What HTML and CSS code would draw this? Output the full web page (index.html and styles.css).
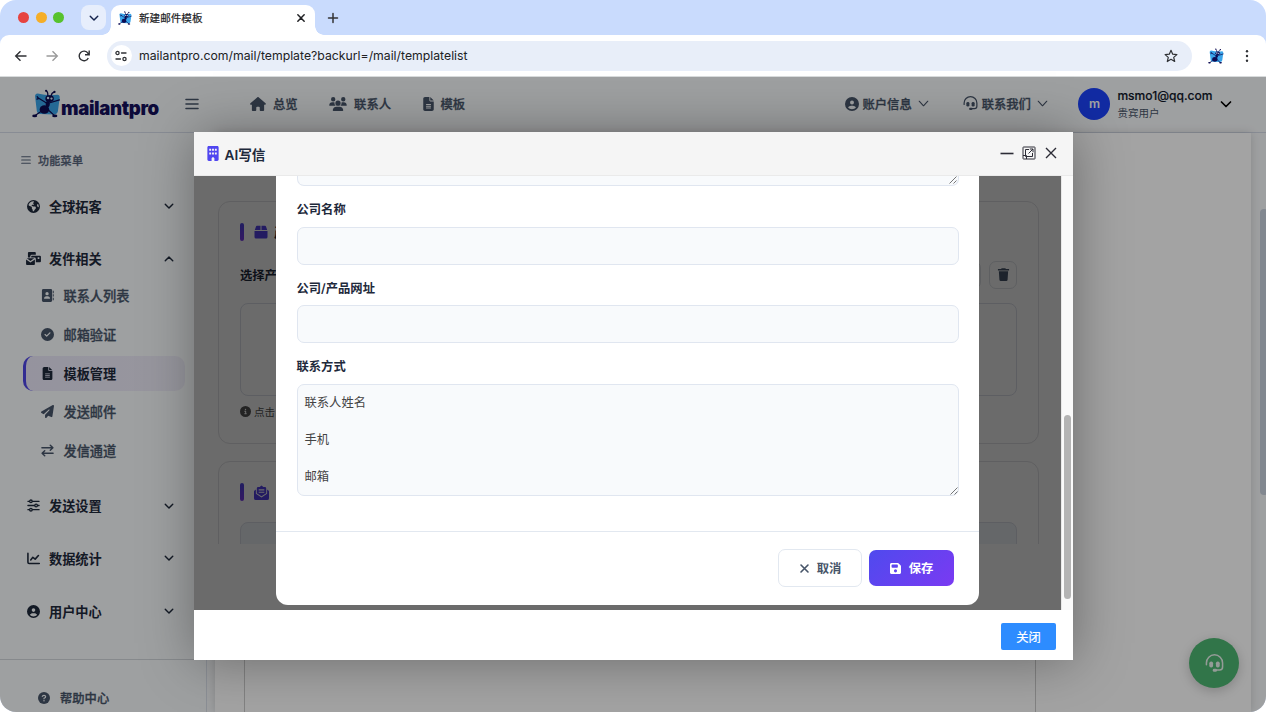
FILE: index.html
```html
<!DOCTYPE html>
<html lang="zh-CN">
<head>
  <meta charset="UTF-8">
  <meta name="viewport" content="width=device-width, initial-scale=1.0">
  <title>新建邮件模板</title>
  <link rel="stylesheet" href="styles.css">
</head>
<body>
  <!-- Icon sprite -->
  <svg class="sprite" xmlns="http://www.w3.org/2000/svg">
    <symbol id="i-ant" viewBox="0 0 28 28">
      <path fill="#3aa5ea" d="M3 7.500Q2.600 4.500 5.500 4.300Q15 6.800 24.500 5.600Q27.200 5.800 26.700 9L25 21.500Q24.500 24.600 21 24.500L8 24.200Q5 24 4.600 21z"/>
      <g fill="#0d0b52">
        <ellipse cx="12" cy="19.800" rx="4.600" ry="4.100"/>
        <ellipse cx="15.200" cy="14.600" rx="2" ry="3"/>
        <ellipse cx="17" cy="9.300" rx="4.100" ry="3.200"/>
        <ellipse cx="2.600" cy="26" rx="2.400" ry="1.300"/>
        <ellipse cx="22" cy="26" rx="2.500" ry="1.300"/>
        <circle cx="13.600" cy="1.800" r="1.100"/>
        <circle cx="21.700" cy="2.800" r="1.100"/>
      </g>
      <g fill="none" stroke="#0d0b52" stroke-width="1.200" stroke-linecap="round">
        <path d="M15.300 6.500Q15.500 3 14 2M18.500 6.500Q19 3.500 21.500 3M14 13.500L6.500 9M16.500 13.500L26.500 10.500M9 21.500L3 25.500M15.500 20L21.500 25.500M6.500 9L4.800 9.800M6.500 9L5 7.500"/>
      </g>
      <g fill="#d7e8f8"><circle cx="15.500" cy="8.800" r="1.200"/><circle cx="18.800" cy="9.200" r="1.100"/></g>
    </symbol>
    <symbol id="i-down" viewBox="0 0 12 12"><path d="M1.500 4L6 8.500L10.500 4" fill="none" stroke="currentColor" stroke-width="1.700" stroke-linecap="round" stroke-linejoin="round"/></symbol>
    <symbol id="i-up" viewBox="0 0 12 12"><path d="M1.500 8L6 3.500L10.500 8" fill="none" stroke="currentColor" stroke-width="1.700" stroke-linecap="round" stroke-linejoin="round"/></symbol>
    <symbol id="i-thin" viewBox="0 0 12 12"><path d="M1.300 3.500L6 8.500L10.700 3.500" fill="none" stroke="currentColor" stroke-width="1.200" stroke-linecap="round" stroke-linejoin="round"/></symbol>
    <symbol id="i-bars" viewBox="0 0 14 14"><path d="M1 2.500H13M1 7H13M1 11.500H13" stroke="currentColor" stroke-width="1.600" stroke-linecap="round"/></symbol>
    <symbol id="i-close" viewBox="0 0 12 12"><path d="M2.200 2.200L9.800 9.800M9.800 2.200L2.200 9.800" stroke="currentColor" stroke-width="1.800" stroke-linecap="round"/></symbol>
    <symbol id="i-house" viewBox="0 0 576 512"><path d="M575.8 255.5c0 18-15 32.1-32 32.1h-32l.7 160.2c0 2.700-.2 5.400-.5 8.100V472c0 22.100-17.900 40-40 40H392c-22.100 0-40-17.900-40-40V384c0-17.700-14.300-32-32-32H256c-17.700 0-32 14.300-32 32v88c0 22.100-17.900 40-40 40H104c-22.100 0-40-17.900-40-40V287.600H32c-18 0-32-14-32-32.100c0-9 3-17 10-24L266.400 8c7-7 15-8 22-8s15 2 21 7L564.800 231.500c8 7 12 15 11 24z"/></symbol>
    <symbol id="i-users" viewBox="0 0 640 512"><path d="M144 0a80 80 0 1 1 0 160a80 80 0 1 1 0-160zM512 0a80 80 0 1 1 0 160a80 80 0 1 1 0-160zM0 298.700C0 239.800 47.800 192 106.700 192h42.700c15.900 0 31 3.500 44.600 9.700c-1.300 7.200-1.900 14.700-1.900 22.300c0 38.200 16.800 72.500 43.300 96H21.300C9.600 320 0 310.400 0 298.700zM405.300 320c26.600-23.500 43.300-57.800 43.300-96c0-7.600-.7-15-1.900-22.300c13.600-6.300 28.700-9.700 44.600-9.700h42.700C592.200 192 640 239.800 640 298.700c0 11.800-9.600 21.300-21.300 21.300zM224 224a96 96 0 1 1 192 0a96 96 0 1 1-192 0zM128 485.300C128 411.700 187.700 352 261.300 352h117.400C452.300 352 512 411.700 512 485.300c0 14.700-11.900 26.700-26.700 26.700H154.700c-14.700 0-26.700-11.900-26.700-26.700z"/></symbol>
    <symbol id="i-file" viewBox="0 0 384 512"><path d="M64 0C28.700 0 0 28.700 0 64V448c0 35.300 28.700 64 64 64H320c35.300 0 64-28.700 64-64V160H256c-17.700 0-32-14.300-32-32V0H64zM256 0V128H384L256 0zM112 256H272c8.800 0 16 7.200 16 16s-7.200 16-16 16H112c-8.800 0-16-7.200-16-16s7.200-16 16-16zm0 64H272c8.800 0 16 7.200 16 16s-7.200 16-16 16H112c-8.800 0-16-7.200-16-16s7.200-16 16-16zm0 64H272c8.800 0 16 7.200 16 16s-7.200 16-16 16H112c-8.800 0-16-7.200-16-16s7.200-16 16-16z"/></symbol>
    <symbol id="i-user" viewBox="0 0 512 512"><path d="M399 384.200C376.900 345.800 335.400 320 288 320H224c-47.400 0-88.900 25.800-111 64.200c35.200 39.200 86.200 63.800 143 63.800s107.800-24.700 143-63.800zM0 256a256 256 0 1 1 512 0A256 256 0 1 1 0 256zm256 16a72 72 0 1 0 0-144 72 72 0 1 0 0 144z"/></symbol>
    <symbol id="i-headset" viewBox="0 0 16 16"><path d="M1.200 9V7.500a6.800 6.800 0 0 1 13.600 0V11a2.500 2.500 0 0 1-2.500 2.500H9.500" fill="none" stroke="currentColor" stroke-width="1.300" stroke-linecap="round"/><rect x="3.600" y="6.300" width="3.200" height="5" rx="1.500"/><rect x="9.200" y="6.300" width="3.200" height="5" rx="1.500"/><rect x="6.500" y="12.500" width="3.600" height="2.500" rx="1.200"/></symbol>
    <symbol id="i-globe" viewBox="0 0 512 512"><path d="M57.700 193l9.400 16.400c8.300 14.500 21.900 25.200 38 29.800L163 255.700c17.200 4.900 29 20.600 29 38.500v39.900c0 11 6.200 21 16 25.900s16 14.900 16 25.900v39c0 15.600 14.900 26.900 29.900 22.600c16.100-4.600 28.600-17.500 32.700-33.800l2.800-11.200c4.200-16.900 15.200-31.400 30.300-40l8.100-4.600c15-8.500 24.200-24.500 24.200-41.700v-8.300c0-12.700-5.100-24.900-14.100-33.900l-3.900-3.900c-9-9-21.200-14.100-33.900-14.100H257c-11.100 0-22.100-2.900-31.800-8.400l-34.500-19.700c-4.300-2.500-7.600-6.500-9.200-11.200c-3.200-9.600 1.100-20 10.200-24.500l5.900-3c6.600-3.300 14.300-3.900 21.300-1.500l23.200 7.700c8.200 2.700 17.200-.4 21.900-7.500c4.700-7 4.200-16.300-1.200-22.800l-13.600-16.300c-10-12-9.900-29.500 .3-41.300l15.700-18.300c8.800-10.300 10.200-25 3.500-36.700l-2.400-4.200c-3.500-.2-6.900-.3-10.400-.3C163.100 48 84.400 108.900 57.700 193zM464 256c0-36.800-9.600-71.400-26.400-101.500L412 164.800c-15.700 6.300-23.800 23.800-18.500 39.800l16.900 50.700c3.500 10.400 12 18.300 22.600 20.900l29.100 7.300c1.200-9 1.800-18.200 1.800-27.500zM0 256a256 256 0 1 1 512 0A256 256 0 1 1 0 256z"/></symbol>
    <symbol id="i-mails" viewBox="0 0 16 14"><path fill-rule="evenodd" d="M3 0h6.500a1 1 0 0 1 1 1v2H6.200a1.700 1.700 0 0 0-1.700 1.700V6H2V1a1 1 0 0 1 1-1zM6.500 4h8.400A1.100 1.100 0 0 1 16 5.100v4.800a1.100 1.100 0 0 1-1.100 1.100H10.500V7.500A1.500 1.500 0 0 0 9 6H5.500V5a1 1 0 0 1 1-1zM12.500 5.700v1.800h1.800V5.700zM0 8l4.700 3.200L9.500 8v5a1 1 0 0 1-1 1H1a1 1 0 0 1-1-1zM.8 6.800h8L4.700 9.700z"/></symbol>
    <symbol id="i-book" viewBox="0 0 14 14"><path fill-rule="evenodd" d="M2.500 0h8A1.500 1.500 0 0 1 12 1.500v11a1.500 1.500 0 0 1-1.500 1.500h-8A1.500 1.500 0 0 1 1 12.500v-11A1.500 1.500 0 0 1 2.500 0zM6.500 3.200a1.800 1.800 0 1 0 0 3.600a1.800 1.800 0 1 0 0-3.600zM3.300 10.500h6.400a2.600 2.600 0 0 0-2.600-2.700H5.900a2.600 2.600 0 0 0-2.600 2.700z"/><path d="M12.700 2h1v2.500h-1zM12.700 5.700h1v2.500h-1zM12.700 9.500h1V12h-1z"/></symbol>
    <symbol id="i-check" viewBox="0 0 512 512"><path d="M256 512A256 256 0 1 0 256 0a256 256 0 1 0 0 512zM369 209L241 337c-9.400 9.400-24.600 9.400-33.900 0l-64-64c-9.400-9.400-9.400-24.600 0-33.900s24.600-9.400 33.900 0l47 47L335 175c9.400-9.400 24.600-9.400 33.900 0s9.400 24.600 0 33.900z"/></symbol>
    <symbol id="i-plane" viewBox="0 0 512 512"><path d="M498.100 5.600c10.100 7 15.400 19.100 13.500 31.200l-64 416c-1.500 9.700-7.400 18.200-16 23s-18.900 5.400-28 1.600L284 427.700l-68.500 74.100c-8.900 9.700-22.900 12.900-35.200 8.100S160 493.200 160 480V396.400c0-4 1.500-7.800 4.200-10.700L331.800 202.800c5.800-6.300 5.600-16-.4-22s-15.700-6.400-22-.7L106 360.800 17.700 316.600C7.100 311.300 .3 300.700 0 288.900s5.900-22.800 16.100-28.700l448-256c10.700-6.100 23.900-5.500 34 1.400z"/></symbol>
    <symbol id="i-swap" viewBox="0 0 14 14"><path d="M1 4H12.500M10 1.300L12.800 4L10 6.700M13 10H1.500M4 7.300L1.200 10L4 12.700" fill="none" stroke="currentColor" stroke-width="1.600" stroke-linecap="round" stroke-linejoin="round"/></symbol>
    <symbol id="i-sliders" viewBox="0 0 14 14"><g fill="none" stroke="currentColor" stroke-width="1.400" stroke-linecap="round"><path d="M1 2.500H2.500M6 2.500H13M1 7H8M11.500 7H13M1 11.500H2.500M6 11.500H13"/><circle cx="4.200" cy="2.500" r="1.400"/><circle cx="9.800" cy="7" r="1.400"/><circle cx="4.200" cy="11.500" r="1.400"/></g></symbol>
    <symbol id="i-chart" viewBox="0 0 14 14"><path d="M1 1.500V11a1.300 1.300 0 0 0 1.300 1.300H13.200M4 8.500L6.300 5.700L8.800 7.700L12.300 3.800" fill="none" stroke="currentColor" stroke-width="1.700" stroke-linecap="round" stroke-linejoin="round"/></symbol>
    <symbol id="i-help" viewBox="0 0 14 14"><circle cx="7" cy="7" r="7"/><path d="M5 5.300Q5.200 3.900 7 3.900T9 5.500Q9 6.500 7 7.300V8" fill="none" stroke="#f8fafc" stroke-width="1.300" stroke-linecap="round"/><circle cx="7" cy="10.200" r=".85" fill="#f8fafc"/></symbol>
    <symbol id="i-building" viewBox="0 0 384 512"><path fill-rule="evenodd" d="M48 0C21.500 0 0 21.500 0 48V464c0 26.500 21.500 48 48 48h96V432c0-26.500 21.500-48 48-48s48 21.500 48 48v80h96c26.500 0 48-21.500 48-48V48c0-26.500-21.500-48-48-48zM64 96h64v64H64zM160 96h64v64h-64zM256 96h64v64h-64zM64 224h64v64H64zM160 224h64v64h-64zM256 224h64v64h-64z"/></symbol>
    <symbol id="i-box" viewBox="0 0 14 14"><path d="M3 .8h3.500V5H.8L2 1.500A1 1 0 0 1 3 .8zM7.500.8H11a1 1 0 0 1 1 .7L13.200 5H7.500zM.5 6h13v6a1.500 1.500 0 0 1-1.500 1.500H2A1.500 1.500 0 0 1 .5 12z"/></symbol>
    <symbol id="i-letter" viewBox="0 0 16 16"><path fill-rule="evenodd" d="M3 3.500A1.500 1.500 0 0 1 4.500 2H6l2-1.600L10 2h1.500A1.500 1.500 0 0 1 13 3.500v5.200L8 12L3 8.700zM5 4.600v1.200h6V4.600zM5 7.100v1.200h6V7.100zM2 4.700v4.600l6 4l6-4V4.700l1.400 1.200a1.500 1.500 0 0 1 .6 1.100v7a2 2 0 0 1-2 2H2a2 2 0 0 1-2-2V7a1.500 1.500 0 0 1 .6-1.100z"/></symbol>
    <symbol id="i-trash" viewBox="0 0 12 14"><path d="M4 .3h4l.6.9H12v1.500H0V1.200h3.400zM1 3.500h10l-.6 9.200a1.400 1.400 0 0 1-1.400 1.300H3a1.400 1.400 0 0 1-1.400-1.300z"/></symbol>
    <symbol id="i-info" viewBox="0 0 512 512"><path d="M256 512A256 256 0 1 0 256 0a256 256 0 1 0 0 512zM216 336h24V272H216c-13.300 0-24-10.700-24-24s10.700-24 24-24h48c13.300 0 24 10.700 24 24v88h8c13.300 0 24 10.700 24 24s-10.700 24-24 24H216c-13.300 0-24-10.700-24-24s10.700-24 24-24zm40-208a32 32 0 1 1 0 64 32 32 0 1 1 0-64z"/></symbol>
    <symbol id="i-save" viewBox="0 32 448 448"><path d="M64 32C28.700 32 0 60.700 0 96V416c0 35.300 28.700 64 64 64H384c35.300 0 64-28.700 64-64V173.300c0-17-6.700-33.300-18.700-45.300L352 50.700C340 38.700 323.700 32 306.700 32H64zm0 96c0-17.700 14.300-32 32-32H288c17.700 0 32 14.300 32 32v64c0 17.700-14.300 32-32 32H96c-17.700 0-32-14.300-32-32V128zM224 288a64 64 0 1 1 0 128 64 64 0 1 1 0-128z"/></symbol>
    <symbol id="i-grip" viewBox="0 0 8 8"><path d="M.5 7.500L7.500 .5M4.500 7.500L7.500 4.500" stroke="#555" stroke-width=".8"/></symbol>
  </svg>

  <div class="window">
    <div class="tabbar">
      <div class="lights"><i class="red"></i><i class="yellow"></i><i class="green"></i></div>
      <div class="tab-search"><svg class="icon s10"><use href="#i-down"/></svg></div>
      <div class="tab">
        <svg class="icon s14"><use href="#i-ant"/></svg>
        <span class="tab-title">新建邮件模板</span>
        <svg class="icon s10"><use href="#i-close"/></svg>
      </div>
      <svg class="icon new-tab" viewBox="0 0 12 12"><path d="M6 1.500V10.500M1.500 6H10.500" stroke="currentColor" stroke-width="1.500" stroke-linecap="round"/></svg>
    </div>

    <div class="toolbar">
      <svg class="icon nav-btn" viewBox="0 0 14 14"><path d="M12.500 7H2M6.500 2.200L1.700 7L6.500 11.800" fill="none" stroke="currentColor" stroke-width="1.400"/></svg>
      <svg class="icon nav-btn off" viewBox="0 0 14 14"><path d="M1.500 7H12M7.500 2.200L12.300 7L7.500 11.800" fill="none" stroke="currentColor" stroke-width="1.400"/></svg>
      <svg class="icon nav-btn" viewBox="0 0 14 14"><path d="M11.300 9A4.800 4.800 0 1 1 11 4.300L12 5.600M12.200 1.500V5.700H8" fill="none" stroke="currentColor" stroke-width="1.400"/></svg>
      <div class="url-bar">
        <span class="site-info"><svg class="icon s12" viewBox="0 0 12 12"><g fill="none" stroke="currentColor" stroke-width="1.300" stroke-linecap="round"><circle cx="2.500" cy="3" r="1.600"/><path d="M6.500 3H11M1 9H5.500"/><circle cx="9.500" cy="9" r="1.600"/></g></svg></span>
        <span class="url">mailantpro.com/mail/template?backurl=/mail/templatelist</span>
        <svg class="icon s14" viewBox="0 0 14 14"><path d="M7 1.300L8.700 5.200L12.900 5.600L9.700 8.400L10.700 12.500L7 10.300L3.300 12.500L4.300 8.400L1.100 5.600L5.300 5.200z" fill="none" stroke="currentColor" stroke-width="1.200" stroke-linejoin="round"/></svg>
      </div>
      <svg class="icon ext"><use href="#i-ant"/></svg>
      <svg class="icon dots" viewBox="0 0 4 14"><circle cx="2" cy="2.200" r="1.200"/><circle cx="2" cy="7" r="1.200"/><circle cx="2" cy="11.800" r="1.200"/></svg>
    </div>

    <div class="page">
      <header class="topbar">
        <div class="logo"><svg class="icon logo-ant"><use href="#i-ant"/></svg><span>mailantpro</span></div>
        <svg class="icon toggle"><use href="#i-bars"/></svg>
        <nav class="topnav">
          <a><svg class="icon w16"><use href="#i-house"/></svg>总览</a>
          <a><svg class="icon w18"><use href="#i-users"/></svg>联系人</a>
          <a><svg class="icon w11"><use href="#i-file"/></svg>模板</a>
        </nav>
        <div class="topright">
          <a class="drop"><svg class="icon s14"><use href="#i-user"/></svg>账户信息<svg class="icon arrow"><use href="#i-thin"/></svg></a>
          <a class="drop"><svg class="icon s15"><use href="#i-headset"/></svg>联系我们<svg class="icon arrow"><use href="#i-thin"/></svg></a>
          <div class="account">
            <span class="avatar">m</span>
            <div class="who"><b>msmo1@qq.com</b><small>贵宾用户</small></div>
            <svg class="icon s12"><use href="#i-down"/></svg>
          </div>
        </div>
      </header>

      <div class="layout">
        <aside class="sidebar">
          <div class="side-title"><svg class="icon s10"><use href="#i-bars"/></svg>功能菜单</div>
          <div class="group"><svg class="icon"><use href="#i-globe"/></svg><span>全球拓客</span><svg class="icon s10"><use href="#i-down"/></svg></div>
          <div class="group"><svg class="icon mails"><use href="#i-mails"/></svg><span>发件相关</span><svg class="icon s10"><use href="#i-up"/></svg></div>
          <div class="subs">
            <a><svg class="icon"><use href="#i-book"/></svg>联系人列表</a>
            <a><svg class="icon"><use href="#i-check"/></svg>邮箱验证</a>
            <a class="active"><svg class="icon"><use href="#i-file"/></svg>模板管理</a>
            <a><svg class="icon"><use href="#i-plane"/></svg>发送邮件</a>
            <a><svg class="icon"><use href="#i-swap"/></svg>发信通道</a>
          </div>
          <div class="group"><svg class="icon"><use href="#i-sliders"/></svg><span>发送设置</span><svg class="icon s10"><use href="#i-down"/></svg></div>
          <div class="group"><svg class="icon"><use href="#i-chart"/></svg><span>数据统计</span><svg class="icon s10"><use href="#i-down"/></svg></div>
          <div class="group"><svg class="icon"><use href="#i-user"/></svg><span>用户中心</span><svg class="icon s10"><use href="#i-down"/></svg></div>
          <div class="side-foot"><svg class="icon s12"><use href="#i-help"/></svg>帮助中心</div>
        </aside>
        <main class="content"><div class="sheet"></div></main>
        <div class="page-scroll"><div class="page-thumb"></div></div>
      </div>

      <div class="chat"><svg class="icon"><use href="#i-headset"/></svg></div>
      <div class="shade"></div>

      <div class="layer">
        <div class="layer-head">
          <svg class="icon building"><use href="#i-building"/></svg>
          <h2>AI写信</h2>
          <div class="layer-tools">
            <svg class="icon s14" viewBox="0 0 14 14"><path d="M.5 7.500H13.500" stroke="currentColor" stroke-width="1.600"/></svg>
            <svg class="icon s14" viewBox="0 0 14 14"><g fill="none" stroke="currentColor" stroke-width="1"><rect x="1" y="1" width="12" height="12" rx=".5"/><path d="M7 3.500H3.500V10.500H10.500V7M7.800 3H11V6.200M11 3L6.500 7.500M1 9.500H4.500V13"/></g></svg>
            <svg class="icon s14" viewBox="0 0 14 14"><path d="M2 2L12 12M12 2L2 12" stroke="currentColor" stroke-width="1.400"/></svg>
          </div>
        </div>

        <div class="layer-body">
          <div class="frame">
            <div class="frame-page">
              <section class="card">
                <h3><svg class="icon s14"><use href="#i-box"/></svg>产</h3>
                <div class="pick">
                  <span>选择产品</span>
                  <button class="square"></button>
                  <button class="square"><svg class="icon"><use href="#i-trash"/></svg></button>
                </div>
                <div class="area"></div>
                <p class="tip"><svg class="icon s11"><use href="#i-info"/></svg>点击</p>
              </section>
              <section class="card">
                <h3><svg class="icon s15"><use href="#i-letter"/></svg></h3>
                <div class="area tinted"></div>
              </section>
            </div>
            <div class="frame-shade"></div>

            <div class="dialog">
              <form class="fields">
                <div class="prev-area"><svg class="grip"><use href="#i-grip"/></svg></div>
                <label for="company">公司名称</label>
                <input type="text" id="company">
                <label for="site">公司/产品网址</label>
                <input type="text" id="site">
                <label for="contact">联系方式</label>
                <div class="area-wrap">
                  <textarea id="contact">联系人姓名

手机

邮箱</textarea>
                  <svg class="grip"><use href="#i-grip"/></svg>
                </div>
              </form>
              <div class="actions">
                <button class="cancel"><svg class="icon s11"><use href="#i-close"/></svg>取消</button>
                <button class="save"><svg class="icon s11"><use href="#i-save"/></svg>保存</button>
              </div>
            </div>
          </div>
          <div class="frame-scroll"><div class="frame-thumb"></div></div>
        </div>

        <div class="layer-foot"><button class="close-btn">关闭</button></div>
      </div>
    </div>
  </div>
</body>
</html>
```

FILE: styles.css
```css
* {
  margin: 0;
  padding: 0;
  box-sizing: border-box;
}

body {
  font-family: Inter, "Noto Sans CJK SC", sans-serif;
  font-size: 12.3px;
  background: #fff;
  overflow: hidden;
}

button, input, textarea {
  font-family: inherit;
}

.sprite {
  display: none;
}

.icon {
  flex: none;
  display: block;
  width: 13px;
  height: 13px;
  fill: currentColor;
}

.s10 { width: 10px; height: 10px; }
.s11 { width: 11px; height: 11px; }
.s12 { width: 12px; height: 12px; }
.s14 { width: 14px; height: 14px; }
.s15 { width: 15px; height: 15px; }
.w11 { width: 11px; height: 14px; }
.w16 { width: 16px; height: 14px; }
.w18 { width: 18px; height: 14px; }

/* Browser window */
.window {
  display: flex;
  flex-direction: column;
  width: 1266px;
  height: 712px;
  border-radius: 16px;
  overflow: hidden;
  background: #c9dbfd;
}

.tabbar {
  display: flex;
  align-items: center;
  height: 35px;
  padding-left: 18px;
}

.lights {
  display: flex;
  gap: 6.5px;
  width: 63px;
}

.lights i {
  width: 11px;
  height: 11px;
  border-radius: 50%;
}

.red { background: #e64340; }
.yellow { background: #f5ae28; }
.green { background: #57c22d; }

.tab-search {
  display: flex;
  align-items: center;
  justify-content: center;
  width: 25px;
  height: 25px;
  border-radius: 8px;
  background: #e7eefc;
  color: #14234d;
}

.tab {
  position: relative;
  display: flex;
  align-items: center;
  width: 204px;
  height: 30px;
  margin: 5px 0 0 5px;
  padding: 0 9px 5px 7px;
  border-radius: 9px 9px 0 0;
  background: #fff;
  color: #202124;
}

.tab::before,
.tab::after {
  content: "";
  position: absolute;
  bottom: 0;
  width: 9px;
  height: 9px;
}

.tab::before {
  left: -9px;
  background: radial-gradient(circle at 0 0, transparent 8.5px, #fff 9px);
}

.tab::after {
  right: -9px;
  background: radial-gradient(circle at 100% 0, transparent 8.5px, #fff 9px);
}

.tab-title {
  flex: 1;
  margin: -1px 0 0 7px;
  font-size: 10.6px;
  -webkit-text-stroke: 0.2px currentColor;
}

.new-tab {
  width: 12px;
  height: 12px;
  margin-left: 12px;
  color: #333;
}

.toolbar {
  display: flex;
  align-items: center;
  height: 42px;
  padding: 0 14px;
  border-bottom: 1px solid #d8dbdc;
  border-radius: 9px 9px 0 0;
  background: #fff;
  color: #303236;
}

.nav-btn {
  width: 14px;
  height: 14px;
  margin: 0 18px 0 -0.5px;
}

.nav-btn.off {
  color: #9b9b9b;
}

.url-bar {
  display: flex;
  align-items: center;
  width: 1085px;
  height: 30px;
  margin-left: -2px;
  padding: 0 14px 0 4px;
  border-radius: 15px;
  background: #e8eef9;
}

.site-info {
  display: flex;
  align-items: center;
  justify-content: center;
  width: 21px;
  height: 21px;
  border-radius: 50%;
  background: #fff;
}

.url {
  flex: 1;
  margin-left: 7.5px;
  font-size: 12.25px;
  color: #202124;
}

.ext {
  width: 16px;
  height: 16px;
  margin-left: 16px;
}

.dots {
  width: 4px;
  height: 14px;
  margin-left: 21px;
}

/* Site */
.page {
  position: relative;
  flex: 1;
  display: flex;
  flex-direction: column;
  min-height: 0;
  background: #f8fafc;
}

.topbar {
  display: flex;
  align-items: center;
  height: 56px;
  padding: 0 34.5px 2px 32px;
  border-bottom: 1px solid #d5dbe8;
}

.logo {
  display: flex;
  align-items: center;
  width: 153px;
  font-size: 18.6px;
  font-weight: 900;
  letter-spacing: -0.35px;
  color: #15105c;
}

.logo span {
  margin-top: 8px;
}

.logo-ant {
  width: 29px;
  height: 29px;
}

.toggle {
  width: 14px;
  height: 14px;
  color: #475569;
}

.topnav {
  display: flex;
  gap: 31.5px;
  margin-left: 51px;
}

.topnav a,
.drop {
  display: flex;
  align-items: center;
  font-weight: 500;
  color: #475569;
  -webkit-text-stroke: 0.3px currentColor;
}

.topnav a {
  gap: 7px;
}

.topright {
  display: flex;
  align-items: center;
  margin-left: auto;
}

.drop {
  gap: 3.5px;
  margin-right: 34px;
}

.drop .icon {
  -webkit-text-stroke: 0;
}

.drop + .drop {
  margin-right: 30px;
}

.arrow {
  width: 11px;
  height: 11px;
  margin-left: 3px;
}

.account {
  display: flex;
  align-items: center;
  gap: 7px;
}

.avatar {
  display: flex;
  align-items: center;
  justify-content: center;
  width: 32px;
  height: 32px;
  border-radius: 50%;
  background: #1d44ff;
  color: #fff;
  font-weight: 600;
}

.who {
  display: flex;
  flex-direction: column;
  margin-top: 2px;
  line-height: 18px;
  color: #0f172a;
}

.who b {
  font-size: 12.05px;
  font-weight: 500;
  -webkit-text-stroke: 0.15px currentColor;
}

.who small {
  font-size: 10.5px;
  color: #475569;
}

.layout {
  flex: 1;
  display: flex;
  min-height: 0;
}

.sidebar {
  width: 207px;
  border-right: 1px solid #dbe1ea;
  overflow: hidden;
  font-size: 13.2px;
}

.side-title {
  display: flex;
  align-items: center;
  gap: 7px;
  height: 16px;
  margin: 18.5px 0 21px 21px;
  font-size: 11px;
  letter-spacing: 0.3px;
  font-weight: 500;
  color: #56647a;
  -webkit-text-stroke: 0.3px currentColor;
}

.group {
  display: flex;
  align-items: center;
  height: 35px;
  margin-bottom: 17.7px;
  padding: 0 32px 0 27px;
  font-weight: 600;
  color: #1e293b;
}

.group span {
  flex: 1;
  margin-left: 9px;
}

.group .mails {
  width: 15px;
  margin: 0 -1px 0 -1px;
}

.subs {
  display: flex;
  flex-direction: column;
  gap: 3.7px;
  margin: -15.5px 21px 20px 23px;
}

.subs a {
  display: flex;
  align-items: center;
  gap: 9.5px;
  height: 35px;
  padding-left: 15px;
  border-left: 3px solid transparent;
  border-radius: 10px;
  font-weight: 500;
  color: #475569;
  -webkit-text-stroke: 0.3px currentColor;
}

.subs a.active {
  border-left-color: #4f46e5;
  background: linear-gradient(90deg, #e9e7f8, #edecf8);
  font-weight: 600;
  color: #1e293b;
  -webkit-text-stroke: 0;
}

.side-foot {
  display: flex;
  align-items: center;
  gap: 10px;
  height: 77px;
  margin-top: 30px;
  padding-left: 38px;
  border-top: 1px solid #d2d6dc;
  font-size: 12.3px;
  font-weight: 500;
  color: #475569;
  -webkit-text-stroke: 0.3px currentColor;
}

.content {
  flex: 1;
  margin: 0 7px 0 8px;
  padding: 0 215px 0 29px;
  background: #fff;
  box-shadow: 0 0 9px rgba(0, 0, 0, 0.16);
}

.sheet {
  height: 100%;
  border: solid #ccc;
  border-width: 0 1px;
}

.page-scroll {
  width: 8px;
  padding-top: 76px;
}

.page-thumb {
  width: 8px;
  height: 286px;
  margin-left: 1.5px;
  border-radius: 4px;
  background: #cbd5e1;
}

.chat {
  position: absolute;
  right: 27px;
  bottom: 24px;
  display: flex;
  align-items: center;
  justify-content: center;
  width: 50px;
  height: 50px;
  border-radius: 50%;
  background: #4eb772;
  box-shadow: 0 3px 12px rgba(0, 0, 0, 0.2);
  color: #e8f3ec;
}

.chat .icon {
  width: 19px;
  height: 19px;
}

.shade {
  position: absolute;
  inset: 0;
  background: rgba(0, 0, 0, 0.36);
}

/* Popup layer */
.layer {
  position: absolute;
  left: 193.5px;
  top: 55px;
  display: flex;
  flex-direction: column;
  width: 879.5px;
  height: 528px;
  background: #fff;
  box-shadow: 1px 1px 50px rgba(0, 0, 0, 0.35);
}

.layer-head {
  display: flex;
  align-items: center;
  gap: 7px;
  height: 44px;
  padding: 0 15px 0 13px;
  border-bottom: 1px solid #eaeaea;
  background: #f5f5f5;
  color: #2c2c36;
}

.building {
  width: 12px;
  height: 15px;
  color: #5046f0;
}

.layer-head h2 {
  flex: 1;
  margin-left: -1px;
  font-size: 13.6px;
  font-weight: 600;
  color: #1e293b;
}

.layer-tools {
  display: flex;
  gap: 8px;
  margin-top: -2px;
}

.layer-body {
  flex: 1;
  display: flex;
  min-height: 0;
}

.frame {
  position: relative;
  flex: 1;
  overflow: hidden;
}

.frame-page {
  display: flex;
  flex-direction: column;
  gap: 17.5px;
  height: 368px;
  padding: 24.5px 21.5px 0 24.5px;
  overflow: hidden;
}

.card {
  flex: none;
  height: 243px;
  padding: 20px 21px;
  border: 1px solid #e2e2e6;
  border-radius: 12px;
}

.card h3 {
  display: flex;
  align-items: center;
  gap: 6px;
  height: 20px;
  font-size: 13.2px;
  color: #1e293b;
}

.card h3::before {
  content: "";
  width: 4px;
  height: 18px;
  margin-right: 4px;
  border-radius: 2px;
  background: linear-gradient(#4f46e5, #7c3aed);
}

.card h3 .icon {
  color: #5340e8;
}

.pick {
  display: flex;
  align-items: center;
  gap: 8px;
  height: 29px;
  margin: 18.5px 0 14px;
  font-weight: 600;
  color: #1e293b;
}

.pick span {
  flex: 1;
}

.square {
  display: flex;
  align-items: center;
  justify-content: center;
  width: 28px;
  height: 28px;
  border: 1px solid #dfe2e8;
  border-radius: 7px;
  background: none;
  color: #475569;
}

.area {
  height: 93px;
  border: 1px solid #dde1ea;
  border-radius: 8px;
}

.area.tinted {
  margin-top: 20px;
  background: #f1f5f9;
}

.tip {
  display: flex;
  align-items: center;
  gap: 3px;
  margin-top: 8px;
  font-size: 10.6px;
  color: #555;
}

.frame-shade {
  position: absolute;
  inset: 0;
  background: rgba(0, 0, 0, 0.58);
}

.dialog {
  position: absolute;
  left: 82px;
  top: 0;
  width: 703.5px;
  height: 428.5px;
  border-radius: 0 0 12px 12px;
  background: #fff;
}

.fields {
  display: flex;
  flex-direction: column;
  height: 355px;
  padding: 0 21px;
}

.fields label {
  height: 18px;
  margin-bottom: 7.5px;
  line-height: 18px;
  font-weight: 600;
  color: #1e293b;
}

.fields input,
.fields textarea,
.prev-area {
  width: 662px;
  border: 1px solid #e0e6f0;
  border-radius: 7px;
  background: #f8fafc;
}

.fields input {
  height: 38px;
  margin-bottom: 15px;
}

.prev-area {
  position: relative;
  height: 10px;
  margin-bottom: 15px;
  border-top: 0;
  border-radius: 0 0 7px 7px;
}

.area-wrap {
  position: relative;
  width: 662px;
}

.fields textarea {
  display: block;
  height: 112px;
  padding: 9px 7px;
  resize: none;
  overflow: hidden;
  font-size: 12.3px;
  line-height: 18.5px;
  color: #444;
}

.grip {
  position: absolute;
  right: 1px;
  bottom: 1px;
  width: 8px;
  height: 8px;
}

.actions {
  display: flex;
  align-items: center;
  justify-content: flex-end;
  gap: 7px;
  height: 73px;
  padding-right: 25px;
  border-top: 1px solid #e2e8f0;
}

.cancel,
.save {
  display: flex;
  align-items: center;
  justify-content: center;
  gap: 7px;
  border-radius: 7px;
  font-size: 12.3px;
  font-weight: 600;
}

.cancel {
  width: 84px;
  height: 38px;
  border: 1px solid #e2e8f0;
  background: #fff;
  color: #475569;
}

.save {
  width: 85px;
  height: 36px;
  gap: 8px;
  border: 0;
  background: linear-gradient(135deg, #4f4aee, #7a3af2);
  color: #fff;
}

.frame-scroll {
  width: 12.5px;
  padding: 239px 2px 0;
  border-left: 1px solid #e8e8e8;
  background: #fafafa;
}

.frame-thumb {
  width: 7px;
  height: 184px;
  border-radius: 4px;
  background: #b4b4b4;
}

.layer-foot {
  display: flex;
  align-items: center;
  justify-content: flex-end;
  height: 50px;
  padding: 3px 17px 0 0;
}

.close-btn {
  width: 55px;
  height: 27px;
  border: 0;
  border-radius: 2px;
  background: #2d8cff;
  color: #fff;
  font-size: 12.3px;
  -webkit-text-stroke: 0.2px currentColor;
}
```
